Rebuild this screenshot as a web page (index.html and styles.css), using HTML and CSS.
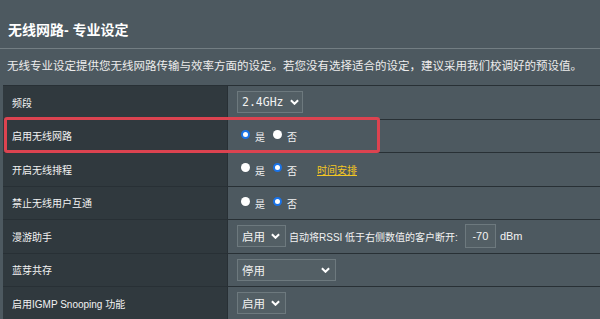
FILE: index.html
```html
<!DOCTYPE html>
<html lang="zh-CN">

<head>
    <meta charset="UTF-8">
    <meta name="viewport" content="width=device-width, initial-scale=1.0">
    <title>无线网路 - 专业设定</title>
    <link rel="stylesheet" href="styles.css">
</head>

<body>
    <div class="header">
        <h1>无线网路- 专业设定</h1>
    </div>
    <hr class="divider">
    <p class="desc">无线专业设定提供您无线网路传输与效率方面的设定。若您没有选择适合的设定，建议采用我们校调好的预设值。</p>

    <div class="settings">
        <div class="row">
            <div class="label">频段</div>
            <div class="field">
                <span class="select mono">2.4GHz <svg class="chev" viewBox="0 0 10 6"><polyline points="1,1 5,5 9,1"/></svg></span>
            </div>
        </div>

        <div class="row highlight">
            <div class="label">启用无线网路</div>
            <div class="field">
                <span class="radio on"></span><span class="opt">是</span>
                <span class="radio"></span><span class="opt">否</span>
            </div>
        </div>

        <div class="row">
            <div class="label">开启无线排程</div>
            <div class="field">
                <span class="radio"></span><span class="opt">是</span>
                <span class="radio on"></span><span class="opt">否</span>
                <a class="link" href="#">时间安排</a>
            </div>
        </div>

        <div class="row">
            <div class="label">禁止无线用户互通</div>
            <div class="field">
                <span class="radio"></span><span class="opt">是</span>
                <span class="radio on"></span><span class="opt">否</span>
            </div>
        </div>

        <div class="row">
            <div class="label">漫游助手</div>
            <div class="field">
                <span class="select">启用 <svg class="chev" viewBox="0 0 10 6"><polyline points="1,1 5,5 9,1"/></svg></span>
                <span class="note">自动将RSSI 低于右侧数值的客户断开:</span>
                <span class="input">-70</span>
                <span class="unit">dBm</span>
            </div>
        </div>

        <div class="row">
            <div class="label">蓝芽共存</div>
            <div class="field">
                <span class="select wide">停用 <svg class="chev" viewBox="0 0 10 6"><polyline points="1,1 5,5 9,1"/></svg></span>
            </div>
        </div>

        <div class="row">
            <div class="label">启用IGMP Snooping 功能</div>
            <div class="field">
                <span class="select">启用 <svg class="chev" viewBox="0 0 10 6"><polyline points="1,1 5,5 9,1"/></svg></span>
            </div>
        </div>
    </div>
</body>

</html>
```

FILE: styles.css
```css
/* styles.css */
body {
    margin: 0;
    background-color: #4d5960;
    color: #f2f2f2;
    font-family: "Liberation Sans", "Noto Sans CJK SC", sans-serif;
    font-size: 10px;
    overflow: hidden;
}

.header {
    padding: 21px 8px 0;
    height: 27px;
}

.header h1 {
    margin: 0;
    font-size: 14px;
    line-height: 18px;
    font-weight: bold;
    color: #fff;
}

.divider {
    margin: 0;
    border: none;
    border-top: 1px solid #737e83;
}

.desc {
    margin: 0;
    padding: 9px 0 0 7px;
    height: 27px;
    line-height: 16px;
    font-size: 11.5px;
    white-space: nowrap;
    color: #ededed;
}

.settings {
    margin-left: 3px;
    border-top: 1px solid #283035;
}

.row {
    position: relative;
    display: grid;
    grid-template-columns: 225px 1fr;
    height: 33.5px;
    border-bottom: 1px solid #283035;
    box-sizing: border-box;
}

.label {
    background-color: #30393e;
    display: flex;
    align-items: center;
    padding-left: 9px;
    border-right: 1px solid #283035;
}

.field {
    display: flex;
    align-items: center;
    padding-left: 9px;
}

.highlight::after {
    content: "";
    position: absolute;
    left: 1px;
    top: -3px;
    width: 376px;
    height: 36px;
    border: 3px solid #dc4350;
    border-radius: 3px;
    box-sizing: border-box;
}

.radio {
    flex-shrink: 0;
    width: 9px;
    height: 9px;
    border-radius: 50%;
    background-color: #fff;
    margin: 0 5px 3px 4px;
    box-sizing: border-box;
}

.radio.on {
    border: 2px solid #1a73e8;
}

.opt {
    margin-right: 4px;
    padding-top: 2px;
}

.link {
    margin-left: 16px;
    color: #f3c623;
    text-decoration: underline;
}

.select {
    display: inline-flex;
    align-items: center;
    justify-content: space-between;
    gap: 6px;
    height: 22px;
    padding: 0 5px 0 4px;
    border: 1px solid #6d797e;
    background-color: #535f65;
    box-sizing: border-box;
    font-size: 11.5px;
}

.select.mono {
    font-family: "DejaVu Sans Mono", monospace;
    font-size: 11.5px;
    width: 66px;
}

.select.wide {
    width: 99px;
}

.chev {
    flex-shrink: 0;
    width: 9px;
    height: 6px;
    fill: none;
    stroke: #fff;
    stroke-width: 2.2;
}

.note {
    margin-left: 3px;
}

.input {
    margin-left: 7px;
    width: 31px;
    height: 24px;
    border: 1px solid #6d797e;
    background-color: #535f65;
    box-sizing: border-box;
    display: flex;
    align-items: center;
    justify-content: center;
    font-size: 11px;
}

.unit {
    margin-left: 4px;
    font-size: 11px;
}
```
